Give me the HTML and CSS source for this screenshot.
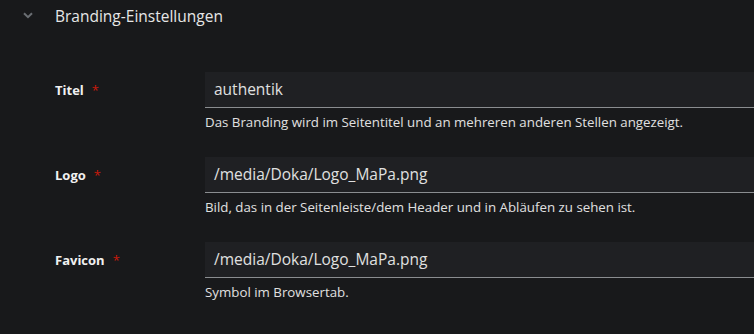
FILE: index.html
```html
<!DOCTYPE html>
<html lang="de">
<head>
<meta charset="utf-8">
<link rel="stylesheet" href="styles.css">
</head>
<body>
<section class="group">
  <div class="group-header">
    <span class="toggle">
      <svg width="10" height="7" viewBox="0 0 10 7"><path d="M1 1.2 L5 5.2 L9 1.2" fill="none" stroke="#6a6e73" stroke-width="2"/></svg>
    </span>
    <span class="group-title">Branding-Einstellungen</span>
  </div>
  <div class="fields">
    <div class="row">
      <label class="label">Titel<span class="req">*</span></label>
      <div class="control">
        <div class="input">authentik</div>
        <div class="helper">Das Branding wird im Seitentitel und an mehreren anderen Stellen angezeigt.</div>
      </div>
    </div>
    <div class="row">
      <label class="label">Logo<span class="req">*</span></label>
      <div class="control">
        <div class="input">/media/Doka/Logo_MaPa.png</div>
        <div class="helper">Bild, das in der Seitenleiste/dem Header und in Abläufen zu sehen ist.</div>
      </div>
    </div>
    <div class="row">
      <label class="label">Favicon<span class="req">*</span></label>
      <div class="control">
        <div class="input">/media/Doka/Logo_MaPa.png</div>
        <div class="helper">Symbol im Browsertab.</div>
      </div>
    </div>
  </div>
</section>
</body>
</html>
```
FILE: styles.css
```css
html, body {
  margin: 0;
  padding: 0;
  background: #18191b;
  color: #e0e0e0;
  font-family: "Open Sans", "Noto Sans", sans-serif;
  overflow: hidden;
}
.group-header {
  display: flex;
  align-items: center;
  height: 31px;
}
.toggle {
  width: 55px;
  display: flex;
  padding-left: 23px;
  box-sizing: border-box;
  align-items: center;
}
.group-title {
  font-size: 15.5px;
  color: #e6e6e6;
}
.fields {
  padding-top: 41px;
  display: flex;
  flex-direction: column;
  gap: 26px;
}
.row {
  display: flex;
}
.label {
  width: 150px;
  padding-left: 55px;
  font-size: 13px;
  font-weight: 700;
  color: #f0f0f0;
  padding-top: 9px;
  flex-shrink: 0;
}
.req {
  color: #c9190b;
  margin-left: 8px;
  font-weight: 400;
}
.control {
  flex: 1;
  min-width: 0;
}
.input {
  height: 35px;
  background: #1f2023;
  border-bottom: 1px solid #8a8d90;
  padding-left: 9px;
  font-size: 15.5px;
  line-height: 35px;
  color: #e0e0e0;
  margin-right: -10px;
  white-space: nowrap;
}
.helper {
  font-size: 13.3px;
  line-height: 18px;
  margin-top: 5px;
  color: #e0e0e0;
  white-space: nowrap;
}
```
